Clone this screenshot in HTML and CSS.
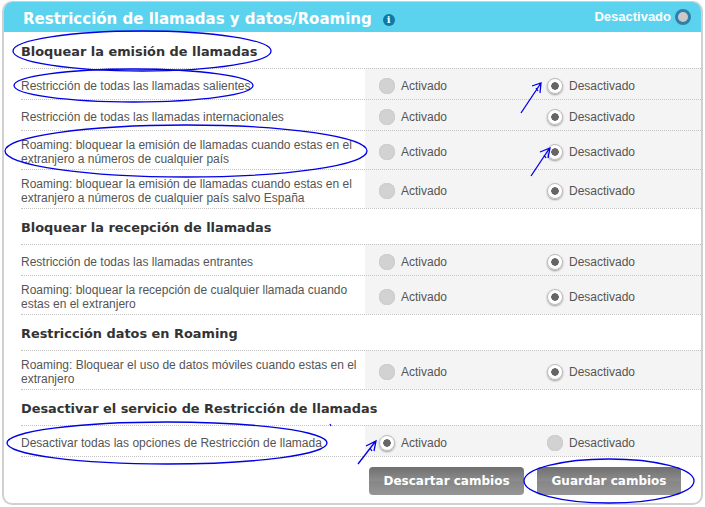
FILE: index.html
```html
<!DOCTYPE html>
<html lang="es">
<head>
<meta charset="utf-8">
<title>Restricción de llamadas</title>
<link rel="stylesheet" href="styles.css">
</head>
<body>
<main class="card">
  <header class="head">
    <h1 class="title">Restricción de llamadas y datos/Roaming</h1>
    <span class="info">i</span>
    <span class="status">Desactivado</span>
    <span class="status-dot"></span>
  </header>

  <h2 class="section first">Bloquear la emisión de llamadas</h2>
  <div class="row h31"><div class="desc">Restricción de todas las llamadas salientes</div><div class="opt"><span class="radio"></span>Activado</div><div class="opt"><span class="radio on"></span>Desactivado</div></div>
  <div class="row h31"><div class="desc">Restricción de todas las llamadas internacionales</div><div class="opt"><span class="radio"></span>Activado</div><div class="opt"><span class="radio on"></span>Desactivado</div></div>
  <div class="row h39"><div class="desc">Roaming: bloquear la emisión de llamadas cuando estas en el extranjero a números de cualquier país</div><div class="opt"><span class="radio"></span>Activado</div><div class="opt"><span class="radio on"></span>Desactivado</div></div>
  <div class="row h39"><div class="desc">Roaming: bloquear la emisión de llamadas cuando estas en el extranjero a números de cualquier país salvo España</div><div class="opt"><span class="radio"></span>Activado</div><div class="opt"><span class="radio on"></span>Desactivado</div></div>

  <h2 class="section">Bloquear la recepción de llamadas</h2>
  <div class="row h31"><div class="desc">Restricción de todas las llamadas entrantes</div><div class="opt"><span class="radio"></span>Activado</div><div class="opt"><span class="radio on"></span>Desactivado</div></div>
  <div class="row h39"><div class="desc">Roaming: bloquear la recepción de cualquier llamada cuando estas en el extranjero</div><div class="opt"><span class="radio"></span>Activado</div><div class="opt"><span class="radio on"></span>Desactivado</div></div>

  <h2 class="section">Restricción datos en Roaming</h2>
  <div class="row h39"><div class="desc">Roaming: Bloquear el uso de datos móviles cuando estas en el extranjero</div><div class="opt"><span class="radio"></span>Activado</div><div class="opt"><span class="radio on"></span>Desactivado</div></div>

  <h2 class="section">Desactivar el servicio de Restricción de llamadas</h2>
  <div class="row h31"><div class="desc">Desactivar todas las opciones de Restricción de llamada</div><div class="opt"><span class="radio on"></span>Activado</div><div class="opt"><span class="radio"></span>Desactivado</div></div>

  <div class="actions">
    <button class="btn discard" type="button">Descartar cambios</button>
    <button class="btn save" type="button">Guardar cambios</button>
  </div>
</main>

<svg class="marks" width="705" height="507" viewBox="0 0 705 507" fill="none" stroke="#0000e6" stroke-width="1.3">
  <ellipse cx="142" cy="51" rx="129" ry="20"/>
  <ellipse cx="133.500" cy="85.500" rx="119.500" ry="16.500"/>
  <ellipse cx="186" cy="151" rx="181" ry="26"/>
  <ellipse cx="167" cy="443" rx="160" ry="21"/>
  <ellipse cx="609" cy="481" rx="85" ry="22"/>
  <path d="M521 113 L541 83 M532 86 L541 83 L540 93 M536 88 L538 91"/>
  <path d="M531 176 L549 149 M540 152 L550 148 L548 158 M544 155 L546 158"/>
  <path d="M358 464 L375 442 M366 446 L376 441 L374 451 M370 448 L372 451"/>
  <path d="M330 424 L331 426"/>
</svg>
</body>
</html>
```
FILE: styles.css
```css
* { box-sizing: border-box; }
html, body { margin: 0; padding: 0; background: #fff; }
body { width: 705px; height: 507px; overflow: hidden; position: relative; font-family: "Liberation Sans", Arial, sans-serif; }
.card { margin: 1px 0 0 2px; width: 701px; height: 504px; border: 2px solid #d0d0d0; border-top-width: 1px; border-radius: 10px; overflow: hidden; background: #fff; }
.head { height: 30px; background: #5bd3ef; display: flex; align-items: flex-start; padding: 0 10px 0 19px; color: #fff; }
.title { margin: 8px 0 0; font: bold 15px/19px "DejaVu Sans", Verdana, sans-serif; white-space: nowrap; }
.info { margin: 12px 0 0 11px; width: 12px; height: 12px; border-radius: 50%; background: #0a7ba6; color: #fff; font: bold 10px/12px "DejaVu Serif", serif; text-align: center; }
.status { margin: 7px 0 0 auto; font: bold 13px/16px "Liberation Sans", Arial, sans-serif; }
.status-dot { margin: 7px 0 0 4px; width: 16px; height: 16px; border-radius: 50%; background: #c9c9c9; border: 3px solid #2f7fa8; }
.section { margin: 0 0 0 17px; height: 36px; padding-top: 3px; border-top: 1px dotted #c4c4c4; font: bold 12.900px/16px "DejaVu Sans", Verdana, sans-serif; color: #333; display: flex; align-items: center; }
.first { border-top: 0; }
.row { display: grid; grid-template-columns: 358px 168px 1fr; margin-left: 17px; padding-top: 3px; border-top: 1px dotted #c4c4c4; color: #555; font-size: 12px; line-height: 14px; background: linear-gradient(90deg, #fff 344px, #f4f4f4 344px); }
.h31 { height: 31px; }
.h39 { height: 39px; }
.desc { align-self: center; width: 340px; }
.opt { display: flex; align-items: center; }
.radio { width: 16px; height: 16px; margin-right: 6px; border-radius: 50%; background: #d2d2d2; box-shadow: inset 0 0 1px #aaa; }
.radio.on { background: radial-gradient(circle, #666 0 3.500px, #fff 4px 6px); border: 1px solid #bbb; box-shadow: 0 1px 2px #999; }
.actions { display: flex; justify-content: flex-end; gap: 13px; margin-left: 17px; padding: 10px 20px 0 0; border-top: 1px dotted #c4c4c4; }
.btn { height: 28px; border: 0; border-radius: 4px; color: #fff; font: bold 12px/16px "DejaVu Sans", Verdana, sans-serif; background: linear-gradient(#6f6f6f, #8d8d8d 50%, #868686 52%, #969696); padding: 0; }
.discard { width: 155px; }
.save { width: 144px; }
.marks { position: absolute; left: 0; top: 0; pointer-events: none; }
```
